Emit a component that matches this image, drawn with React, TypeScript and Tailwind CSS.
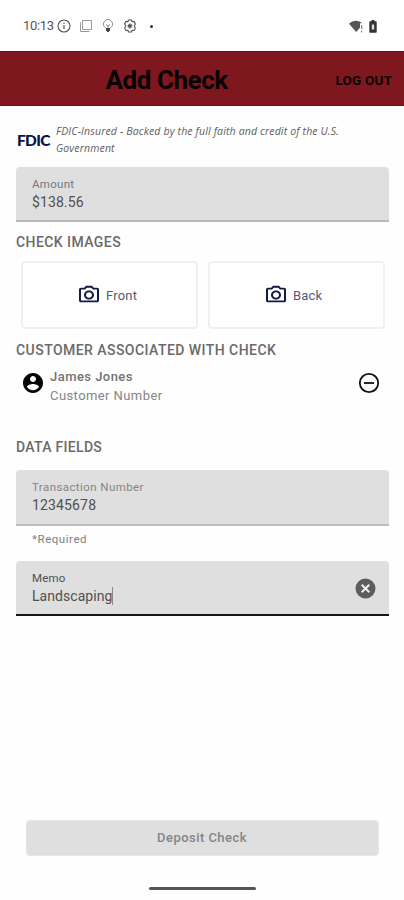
import type { ReactNode } from "react";

function StatusBar() {
  return (
    <div className="flex h-[51px] items-center bg-white pl-[23px] pr-[27px] pt-px text-[#555]">
      <span className="w-[34px] whitespace-nowrap text-[13px] leading-4 tracking-[-0.3px]">10:13</span>
      <svg className="h-[14px] w-[14px]" viewBox="0 0 14 14" fill="none" stroke="currentColor">
        <circle cx="7" cy="7" r="6" strokeWidth="1.1" />
        <path d="M7 6v4M7 3.7v1.2" strokeWidth="1.2" />
      </svg>
      <svg className="ml-2 h-[14px] w-[14px]" viewBox="0 0 14 14" fill="none" stroke="#999">
        <path d="M3.5 1.5h9v9h-9zM1.5 3.5v9h9" strokeWidth="1" />
      </svg>
      <svg className="ml-2 h-[14px] w-[14px]" viewBox="0 0 14 14" fill="none" stroke="#888">
        <path d="M5 9C3.2 8 2.5 6.8 2.5 5a4.5 4.5 0 0 1 9 0C11.5 6.8 10.8 8 9 9M5 5.5l2 1.5 2-1.5M7 7v2" strokeWidth="1" />
        <path d="M5 9h4v3H5zM6 12h2v1H6z" fill="#444" stroke="none" />
      </svg>
      <svg className="ml-2 h-[14px] w-[14px]" viewBox="0 0 14 14" fill="none" stroke="currentColor">
        <path d="M5.5 1h3l.6 1.7 1.8-.3 1.5 2.5L11.2 7l1.2 2-1.5 2.5-1.8-.2-.6 1.7h-3l-.6-1.7-1.8.2L1.6 9l1.2-2-1.2-2.1 1.5-2.5 1.8.3z" strokeWidth="1.1" strokeLinejoin="round" />
        <path d="M7 4.5v5M4.8 5.8l4.4 2.4M9.2 5.8L4.8 8.2" strokeWidth="1.4" />
      </svg>
      <span className="ml-[13px] h-[3px] w-[3px] rounded-full bg-[#333]" />
      <svg className="ml-auto h-[13px] w-[15px]" viewBox="0 0 15 13">
        <path d="M0 3.7C3.8-.2 10-.2 13.2 3.3H11v4.5L7.2 12z" fill="#555" />
        <path d="M12.7 5v4M12.7 10.5v2" stroke="#777" strokeWidth="1.1" />
      </svg>
      <svg className="ml-[5px] h-[13px] w-[8px]" viewBox="0 0 8 13">
        <path d="M2.5 0h3v1.300H7q.7 0 .7.7v10q0 .8-.7.8H1q-.7 0-.7-.8V2q0-.7.7-.7h1.500z" fill="#333" />
        <path d="M2.800 5.500L4 3.800l1.200 1.700v4H2.800z" fill="#ddd" />
      </svg>
    </div>
  );
}

function Field({ label, value, className, labelClass, valueClass, children }: {
  label: string;
  value: ReactNode;
  className: string;
  labelClass: string;
  valueClass: string;
  children?: ReactNode;
}) {
  return (
    <div className={`ml-4 mr-[15px] flex items-center justify-between rounded-t-[4px] bg-[#dfdfdf] pl-4 pr-[13px] ${className}`}>
      <div className="flex flex-col whitespace-nowrap">
        <span className={`h-[18px] text-[11.500px] leading-[18px] ${labelClass}`}>{label}</span>
        <span className={`flex h-[18px] items-center text-[14px] leading-[18px] text-[#505050] ${valueClass}`}>{value}</span>
      </div>
      {children}
    </div>
  );
}

function CameraButton({ label }: { label: string }) {
  return (
    <button className="flex h-[68px] w-[177px] items-center rounded-[4px] border-2 border-[#f0f0f0] bg-white pl-[54px] text-[13px] text-[#555b70]">
      <svg className="h-[22px] w-[24px]" viewBox="0 0 24 24" fill="#101b45" preserveAspectRatio="none">
        <path d="M14.120 4l1.830 2H20v12H4V6h4.050l1.830-2h4.240M15 2H9L7.170 4H4c-1.100 0-2 .900-2 2v12c0 1.100.900 2 2 2h16c1.100 0 2-.900 2-2V6c0-1.100-.900-2-2-2h-3.170L15 2zm-3 7c1.650 0 3 1.350 3 3s-1.350 3-3 3-3-1.350-3-3 1.350-3 3-3m0-2c-2.760 0-5 2.240-5 5s2.240 5 5 5 5-2.240 5-5-2.240-5-5-5z" />
      </svg>
      <span className="ml-[5px] mt-px tracking-[0.2px]">{label}</span>
    </button>
  );
}

function Heading({ children, className }: { children: ReactNode; className: string }) {
  return <h2 className={`ml-4 h-5 whitespace-nowrap text-[14px] font-medium leading-5 text-[#6a6a6a] ${className}`}>{children}</h2>;
}

export default function App() {
  return (
    <div className="flex h-[900px] w-[404px] flex-col overflow-hidden bg-[#fefefe] font-[Roboto,sans-serif]">
      <StatusBar />
      <header className="flex h-[55px] items-center border-y border-[#650f17] bg-[#7f171f] pt-[2px] text-[#080304]">
        <h1 className="ml-[105.500px] w-[230px] whitespace-nowrap text-[26px] font-bold leading-8 tracking-[-0.450px]">Add Check</h1>
        <button className="whitespace-nowrap text-[13.500px] font-bold leading-4 tracking-[0.2px]">LOG OUT</button>
      </header>
      <div className="flex h-[61px] items-center pt-[6px]">
        <span className="ml-[17px] w-[39px] font-[Lato,sans-serif] text-[15.500px] font-black leading-4 tracking-[-0.7px] text-[#0b1245]">FDIC</span>
        <p className="whitespace-nowrap font-['Open_Sans',sans-serif] text-[10.500px] italic leading-[17px] tracking-[0.150px] text-[#606060]">
          FDIC-Insured - Backed by the full faith and credit of the U.S.<br />Government
        </p>
      </div>
      <Field label="Amount" value="$138.56" className="h-[55px] border-b-2 border-[#b8b8b8] pb-px" labelClass="text-[#777] tracking-[0.3px]" valueClass="tracking-[0.100px]" />
      <Heading className="mt-[10px] tracking-[0.430px]">CHECK IMAGES</Heading>
      <div className="mt-[9px] flex gap-[10px] pl-[21px]">
        <CameraButton label="Front" />
        <CameraButton label="Back" />
      </div>
      <Heading className="mt-[11px] tracking-[0.450px]">CUSTOMER ASSOCIATED WITH CHECK</Heading>
      <div className="mt-[7px] flex h-[38px] pl-[21px] pr-[23px]">
        <svg className="mt-[4px] h-6 w-6" viewBox="0 0 24 24" fill="#050505">
          <path d="M12 2C6.480 2 2 6.480 2 12s4.480 10 10 10 10-4.480 10-10S17.520 2 12 2zm0 3c1.660 0 3 1.340 3 3s-1.340 3-3 3-3-1.340-3-3 1.340-3 3-3zm0 14.200c-2.500 0-4.710-1.280-6-3.220.03-1.990 4-3.080 6-3.080 1.990 0 5.970 1.090 6 3.080-1.290 1.940-3.500 3.220-6 3.220z" />
        </svg>
        <div className="ml-[5px] whitespace-nowrap text-[13px] leading-[19px]">
          <div className="font-medium tracking-[0.450px] text-[#727272]">James Jones</div>
          <div className="tracking-[0.420px] text-[#858585]">Customer Number</div>
        </div>
        <svg className="ml-auto mt-[4px] h-6 w-6" viewBox="0 0 24 24" fill="none" stroke="#111" strokeWidth="1.800">
          <circle cx="12" cy="12" r="9.200" />
          <path d="M7 12h10" />
        </svg>
      </div>
      <Heading className="mt-[32px] tracking-[0.300px]">DATA FIELDS</Heading>
      <Field label="Transaction Number" value="12345678" className="mt-[13px] h-[56px] border-b-2 border-[#bcbcbc] pb-[2px]" labelClass="text-[#858585] tracking-[0.420px]" valueClass="tracking-[0.150px]" />
      <div className="ml-8 mt-1 h-[18px] text-[11.500px] leading-[18px] tracking-[0.550px] text-[#808080]">*Required</div>
      <Field
        label="Memo"
        value={<>Landscaping<span className="h-[18px] w-px bg-[#888]" /></>}
        className="mt-[13px] h-[55px] border-b-2 border-[#171717] pb-px"
        labelClass="text-[#505050] tracking-[0.2px]"
        valueClass="tracking-[0.050px]"
      >
        <svg className="mt-[2px] h-[21px] w-[21px]" viewBox="0 0 21 21">
          <circle cx="10.500" cy="10.500" r="10" fill="#5d5d5d" />
          <path d="M6.700 6.700l7.600 7.600M14.300 6.700l-7.600 7.600" stroke="#eee" strokeWidth="2" />
        </svg>
      </Field>
      <button className="mx-[25.500px] mt-auto h-[36px] rounded-[4px] border border-[#e6e6e6] bg-[#dfdfdf] text-[13px] font-medium tracking-[0.450px] text-[#858585]">Deposit Check</button>
      <div className="mx-auto mb-[10px] mt-[31px] h-[3px] w-[107px] rounded-full bg-[#555]" />
    </div>
  );
}
